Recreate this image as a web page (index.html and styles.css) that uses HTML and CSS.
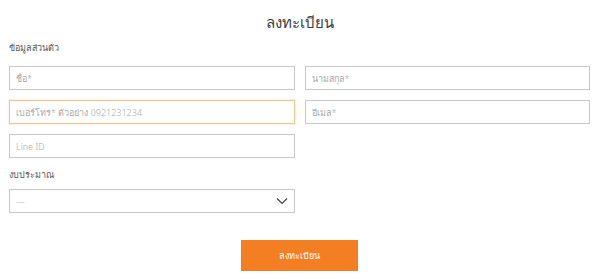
FILE: index.html
```html
<!DOCTYPE html>
<html lang="th">
<head>
    <meta charset="UTF-8">
    <meta name="viewport" content="width=device-width, initial-scale=1.0">
    <title>ลงทะเบียน</title>
    <link rel="stylesheet" href="styles.css">
</head>
<body>
    <form class="register-form">
        <h2 class="form-title">ลงทะเบียน</h2>

        <p class="section-label">ข้อมูลส่วนตัว</p>
        <div class="field-grid">
            <input type="text" placeholder="ชื่อ*">
            <input type="text" placeholder="นามสกุล*">
            <input type="tel" class="focused" placeholder="เบอร์โทร* ตัวอย่าง 0921231234">
            <input type="email" placeholder="อีเมล*">
            <input type="text" placeholder="Line ID">
        </div>

        <p class="section-label budget-label">งบประมาณ</p>
        <div class="select-wrap">
            <select>
                <option>---</option>
            </select>
            <svg class="chevron" width="12" height="8" viewBox="0 0 12 8">
                <path d="M1 1.5 L6 6.5 L11 1.5" fill="none" stroke="#444" stroke-width="1.2"/>
            </svg>
        </div>

        <div class="actions">
            <button type="button" class="submit-btn">ลงทะเบียน</button>
        </div>
    </form>
</body>
</html>
```

FILE: styles.css
```css
body {
    margin: 0;
    padding: 0;
    background-color: #fff;
    font-family: "Noto Sans", "Liberation Sans", sans-serif;
    color: #333;
}
.register-form {
    padding: 0 10px 0 9px;
}
.form-title {
    margin: 0;
    padding-top: 10px;
    height: 27px;
    line-height: 24px;
    text-align: center;
    font-size: 15px;
    font-weight: 300;
    color: #3c3c3c;
}
.section-label {
    margin: 0;
    height: 29px;
    line-height: 22px;
    font-size: 9px;
    color: #555;
}
.field-grid {
    display: grid;
    grid-template-columns: 1fr 1fr;
    grid-auto-rows: 24px;
    gap: 10px;
}
.field-grid input,
.select-wrap select {
    box-sizing: border-box;
    display: block;
    width: 100%;
    height: 24px;
    margin: 0;
    padding: 0 6px;
    border: 1px solid #c8c8c8;
    border-radius: 0;
    background: #fff;
    font-family: inherit;
    font-size: 9px;
    font-weight: 300;
    color: #999;
    outline: none;
}
.field-grid input::placeholder {
    color: #a8a8a8;
}
.field-grid input.focused {
    border-color: #f0c58a;
    box-shadow: 0 0 2px rgba(240, 170, 80, 0.35);
}
.budget-label {
    height: 31px;
    line-height: 34px;
}
.select-wrap {
    position: relative;
    width: 286px;
}
.select-wrap select {
    appearance: none;
    -webkit-appearance: none;
    color: #aaa;
}
.chevron {
    position: absolute;
    top: 8px;
    right: 7px;
}
.actions {
    display: flex;
    justify-content: center;
    padding-top: 27px;
}
.submit-btn {
    width: 117px;
    height: 31px;
    border: none;
    background-color: #f37f22;
    color: #fff;
    font-family: inherit;
    font-size: 9px;
    font-weight: 300;
    cursor: pointer;
}
```
